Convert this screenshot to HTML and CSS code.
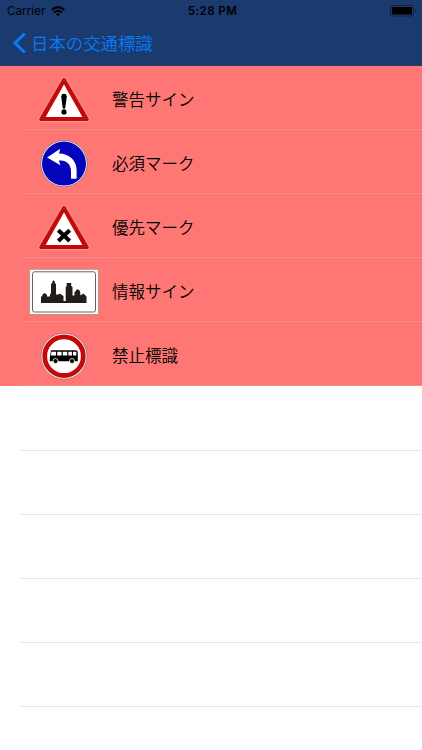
FILE: index.html
```html
<!DOCTYPE html>
<html lang="ja">
<head>
    <meta charset="utf-8">
    <meta name="viewport" content="width=device-width, initial-scale=1.0">
    <title>日本の交通標識</title>
    <link rel="stylesheet" href="styles.css">
</head>
<body>
    <header class="header">
        <div class="status-bar">
            <div class="status-left">
                <span class="carrier">Carrier</span>
                <svg class="wifi" viewBox="0 0 14 10">
                    <path d="M0 3.2Q7-3 14 3.2L12.6 4.7Q7-.3 1.4 4.7Z"/>
                    <path d="M2.4 5.7Q7 1.7 11.6 5.7L10.1 7.2Q7 4.6 3.9 7.2Z"/>
                    <path d="M4.8 8.1Q7 6.3 9.2 8.1L7 10.2Z"/>
                </svg>
            </div>
            <span class="time">5:28 PM</span>
            <svg class="battery" viewBox="0 0 27 12">
                <rect class="battery-case" x=".5" y=".5" width="23" height="10.5" rx="2.5"/>
                <rect x="2" y="2" width="20" height="7.5" rx="1"/>
                <path class="battery-cap" d="M25 4Q27 5.7 25 7.5Z"/>
            </svg>
        </div>
        <nav class="nav-bar">
            <svg class="chevron" viewBox="0 0 14 22">
                <path d="M12.8 1.5L3 11L12.8 20.5"/>
            </svg>
            <a class="back" href="#">日本の交通標識</a>
        </nav>
    </header>

    <ul class="list">
        <li class="row sign-row">
            <svg class="sign" viewBox="0 0 90 64">
                <path class="tri-edge" d="M44 14L67 53.3H21Z"/>
                <path class="tri-red" d="M44 14L67 53.3H21Z"/>
                <path class="tri-white" d="M44 18.6L62.4 51H25.6Z"/>
                <path d="M41.2 30.2Q41.4 27.8 44 27.8T46.8 30.2L45.2 42.5H42.8Z"/>
                <circle cx="44" cy="45.9" r="2.6"/>
            </svg>
            <span class="label">警告サイン</span>
        </li>
        <li class="row sign-row">
            <svg class="sign" viewBox="0 0 90 64">
                <circle class="round-edge" cx="44" cy="33.6" r="23.1"/>
                <circle class="round-blue" cx="44" cy="33.6" r="22"/>
                <path class="arrow" d="M27.1 27.4L40.2 18.8L39 23.5C50 23.5 56.6 31.5 56.6 40V48.8H51V41C51 34 46 29.6 38.9 30.5L40.4 35.2Z"/>
            </svg>
            <span class="label">必須マーク</span>
        </li>
        <li class="row sign-row">
            <svg class="sign" viewBox="0 0 90 64">
                <path class="tri-edge" d="M44 14L67 53.3H21Z"/>
                <path class="tri-red" d="M44 14L67 53.3H21Z"/>
                <path class="tri-white" d="M44 18.6L62.4 51H25.6Z"/>
                <path class="cross" d="M38.3 36.3L49.7 47M49.7 36.3L38.3 47"/>
            </svg>
            <span class="label">優先マーク</span>
        </li>
        <li class="row sign-row">
            <svg class="sign" viewBox="0 0 90 64">
                <rect class="board" x="9.3" y="11.2" width="69.3" height="45.4"/>
                <rect class="board-line" x="12.5" y="13.8" width="63" height="40.2" rx="2"/>
                <path class="skyline" d="M21 45V39L22.5 37.5V36.5L24.5 35L27 36.8V38.5H30V36.5L31 35V26L32.3 25V23.5L33.5 22.3L34.8 23.5V25L36 26V36.5H38L40 35.8L43.5 38V43H45.7V29L46.7 28V25H51.2V28L52.5 29V37.5H54.5V34L56 33V32L58 31.2L60 33L60.5 37.5L63.5 35.5L66.5 38.5V45Z"/>
            </svg>
            <span class="label">情報サイン</span>
        </li>
        <li class="row sign-row">
            <svg class="sign" viewBox="0 0 90 64">
                <circle class="round-edge" cx="44" cy="34.2" r="23"/>
                <circle class="round-red" cx="44" cy="34.2" r="19.3"/>
                <path d="M31 28.3H55.9Q57.8 28.3 57.8 30.5V39.2H29.8V36Z"/>
                <path class="windows" d="M31.4 29.7H36V33.5H31ZM37.2 29.7H41.6V33.5H37.2ZM42.8 29.7H47.2V33.5H42.8ZM48.4 29.7H51.9V33.5H48.4ZM53 29.7H56.4V33.5H53Z"/>
                <circle class="wheel" cx="35.5" cy="39" r="2.5"/>
                <circle class="wheel" cx="52" cy="39" r="2.5"/>
            </svg>
            <span class="label">禁止標識</span>
        </li>
        <li class="row"></li>
        <li class="row"></li>
        <li class="row"></li>
        <li class="row"></li>
        <li class="row"></li>
        <li class="row"></li>
    </ul>
</body>
</html>
```

FILE: styles.css
```css
body {
    margin: 0;
    height: 750px;
    overflow: hidden;
    background-color: #ffffff;
    color: #000000;
    font-family: "Noto Sans CJK JP", sans-serif;
}

.header {
    box-sizing: border-box;
    height: 66px;
    background-color: #1b3a6d;
    border-bottom: 1px solid #38365c;
}

.status-bar {
    display: grid;
    grid-template-columns: 1fr auto 1fr;
    align-items: center;
    height: 22px;
    padding: 0 5px 0 7px;
    font-family: Inter, sans-serif;
    font-size: 11.5px;
}

.status-left {
    display: flex;
    align-items: center;
    gap: 6px;
}

.carrier {
    letter-spacing: 0.1px;
}

.wifi {
    width: 14px;
    height: 10px;
}

.time {
    padding-left: 1px;
    font-weight: 600;
    letter-spacing: 0.45px;
}

.battery {
    justify-self: end;
    width: 27px;
    height: 12px;
}

.battery-case {
    fill: none;
    stroke: #000000;
    stroke-opacity: 0.45;
}

.battery-cap {
    fill-opacity: 0.45;
}

.nav-bar {
    display: flex;
    align-items: center;
    height: 42px;
    padding-left: 12px;
}

.chevron {
    width: 14px;
    height: 22px;
    margin-right: 5px;
    fill: none;
    stroke: #087cfa;
    stroke-width: 3;
}

.back {
    padding-bottom: 1px;
    color: #087cfa;
    font-size: 17.4px;
    font-weight: 350;
    line-height: 24px;
    text-decoration: none;
}

.list {
    list-style: none;
    margin: 0;
    padding: 0;
}

.row {
    display: flex;
    align-items: center;
    box-sizing: border-box;
    height: 64px;
    padding-left: 20px;
    background: linear-gradient(#e5e5e7, #e5e5e7) 21px 0 / 100% 1px no-repeat;
}

.sign-row {
    background: linear-gradient(#f58e8b, #f58e8b) 21px 63px / 100% 1px no-repeat #ff7774;
}

.sign-row + .row:not(.sign-row) {
    background: none;
}

.sign {
    flex: none;
    width: 90px;
    height: 64px;
}

.label {
    margin-left: 2px;
    padding-top: 2px;
    font-size: 16.5px;
    font-weight: 350;
    line-height: 24px;
}

/* triangular signs */
.tri-edge {
    stroke: #d9a09c;
    stroke-width: 5.2;
    stroke-linejoin: round;
}

.tri-red {
    fill: #c5080c;
    stroke: #c5080c;
    stroke-width: 3.6;
    stroke-linejoin: round;
}

.tri-white {
    fill: #ffffff;
}

.cross {
    fill: none;
    stroke: #000000;
    stroke-width: 4;
}

/* round signs */
.round-edge {
    fill: #ffffff;
    stroke: #75555f;
    stroke-width: 0.6;
}

.round-blue {
    fill: #0404bd;
}

.round-red {
    fill: #ffffff;
    stroke: #c5080c;
    stroke-width: 4.8;
}

.arrow,
.windows {
    fill: #ffffff;
}

.wheel {
    stroke: #ffffff;
    stroke-width: 0.8;
}

/* information board */
.board {
    fill: #ffffff;
    stroke: #a77573;
    stroke-width: 0.7;
}

.board-line {
    fill: none;
    stroke: #555555;
    stroke-width: 0.9;
}

.skyline {
    fill: #211d18;
}
```
